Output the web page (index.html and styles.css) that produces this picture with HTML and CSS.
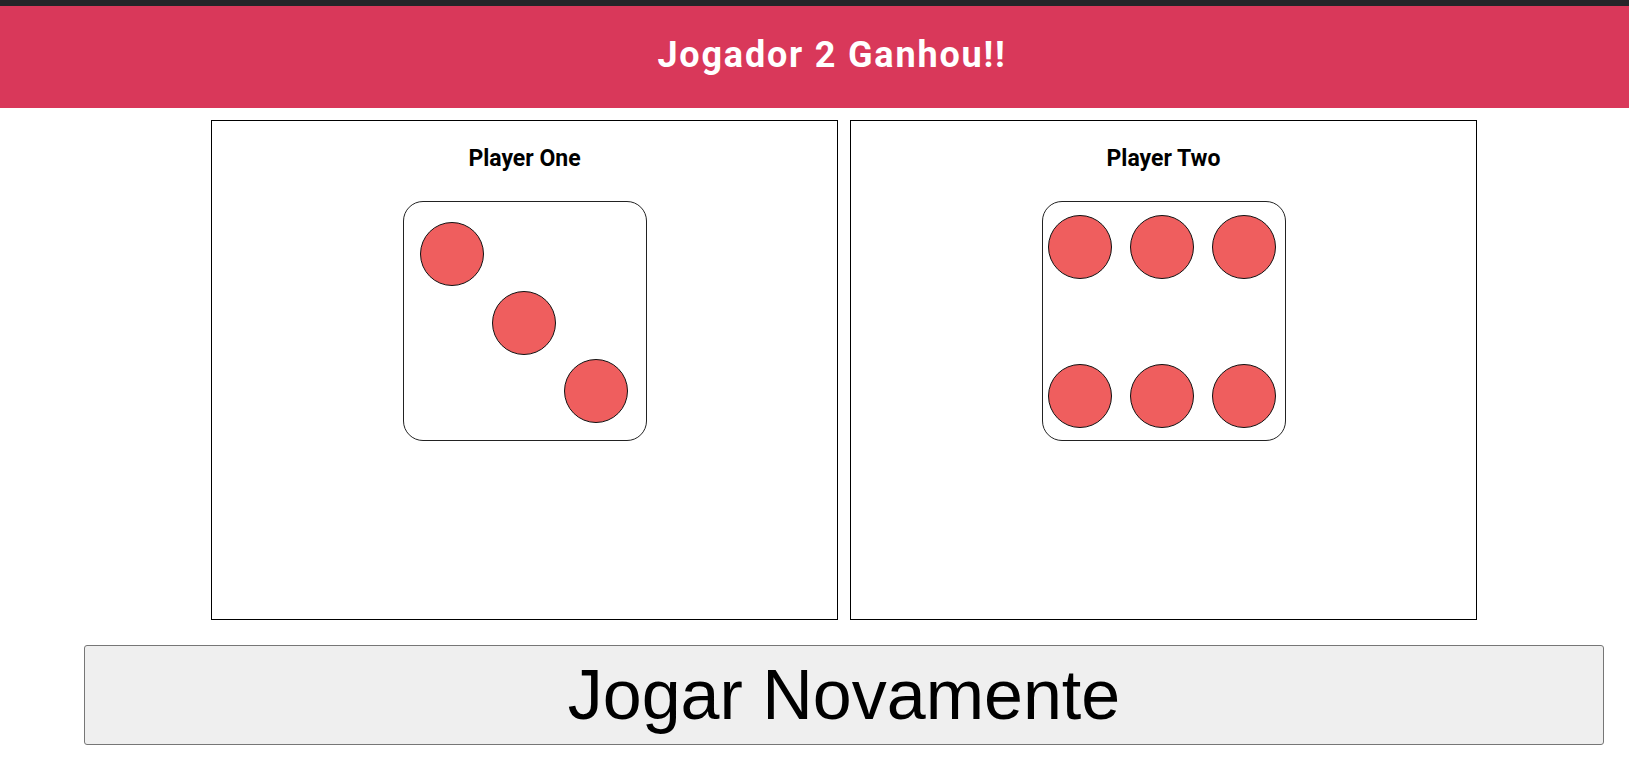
FILE: index.html
```html
<!DOCTYPE html>
<html lang="pt">
<head>
<meta charset="utf-8">
<title>Dice Game</title>
<link rel="stylesheet" href="styles.css">
</head>
<body>
<div class="topbar"></div>
<header class="banner">
  <h1 class="banner-title">Jogador 2 Ganhou!!</h1>
</header>
<main class="wrap">
  <section class="players">
    <div class="player">
      <h3 class="player-name">Player One</h3>
      <div class="die die-three">
        <span class="pip p1"></span>
        <span class="pip p2"></span>
        <span class="pip p3"></span>
      </div>
    </div>
    <div class="player">
      <h3 class="player-name">Player Two</h3>
      <div class="die die-six">
        <span class="pip"></span>
        <span class="pip"></span>
        <span class="pip"></span>
        <span class="pip"></span>
        <span class="pip"></span>
        <span class="pip"></span>
      </div>
    </div>
  </section>
  <button class="again" type="button">Jogar Novamente</button>
</main>
</body>
</html>
```
FILE: styles.css
```css
html, body {
  margin: 0;
  padding: 0;
  background: #ffffff;
}

body {
  font-family: Roboto, "Liberation Sans", Arial, sans-serif;
  color: #000;
}

.topbar {
  height: 6px;
  background: #252529;
}

.banner {
  height: 102px;
  background: #d9385a;
  box-sizing: border-box;
  padding: 28px 0 0 35px;
}

.banner-title {
  margin: 0;
  text-align: center;
  color: #ffffff;
  font-family: Roboto, sans-serif;
  font-weight: 700;
  font-size: 36px;
  line-height: 42px;
  letter-spacing: 1.8px;
}

.wrap {
  margin-left: 59px;
  padding-top: 12px;
  display: flex;
  flex-direction: column;
  align-items: center;
}

.players {
  display: flex;
  gap: 12px;
}

.player {
  box-sizing: border-box;
  width: 627px;
  height: 500px;
  border: 1px solid #000;
  padding-top: 24px;
  display: flex;
  flex-direction: column;
  align-items: center;
}

.player-name {
  margin: 0 0 29px;
  font-family: Roboto, sans-serif;
  font-weight: 700;
  font-size: 23px;
  line-height: 27px;
}

.die {
  box-sizing: border-box;
  width: 244px;
  height: 240px;
  border: 1px solid #222;
  border-radius: 20px;
  display: grid;
}

.pip {
  box-sizing: border-box;
  width: 64px;
  height: 64px;
  border-radius: 50%;
  border: 1px solid #111;
  background: #ef5e5e;
}

.die-three {
  padding: 20px 0 0 16px;
  grid-template-columns: 64px 64px 64px;
  grid-template-rows: 64px 64px 64px;
  column-gap: 8px;
  row-gap: 4.5px;
}

.die-three .p1 { grid-column: 1; grid-row: 1; }
.die-three .p2 { grid-column: 2; grid-row: 2; }
.die-three .p3 { grid-column: 3; grid-row: 3; }

.die-six {
  padding: 13px 0 0 5px;
  grid-template-columns: 64px 64px 64px;
  grid-template-rows: 64px 64px;
  column-gap: 18px;
  row-gap: 85px;
}

.again {
  box-sizing: border-box;
  margin-top: 25px;
  width: 1520px;
  height: 100px;
  padding: 0;
  background: #efefef;
  border: 1px solid #767676;
  border-radius: 3px;
  font-family: "Liberation Sans", Arial, sans-serif;
  font-size: 70px;
  color: #000;
}
```
